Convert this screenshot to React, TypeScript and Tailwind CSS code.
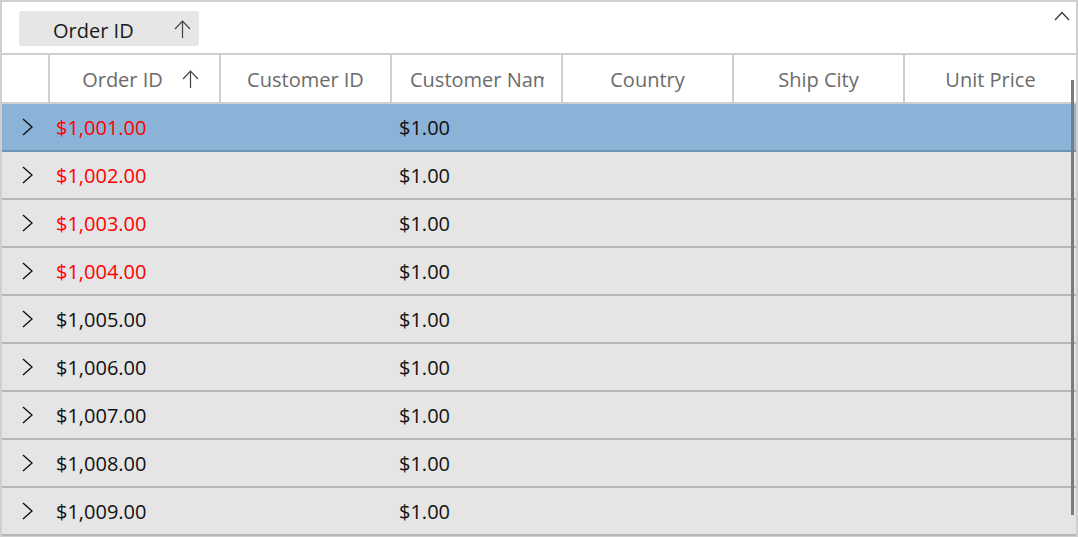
import React from 'react'

type Row = {
    orderId: string;
    price: string;
    red: boolean;
}

const rows: Row[] = [
    { orderId: "$1,001.00", price: "$1.00", red: true },
    { orderId: "$1,002.00", price: "$1.00", red: true },
    { orderId: "$1,003.00", price: "$1.00", red: true },
    { orderId: "$1,004.00", price: "$1.00", red: true },
    { orderId: "$1,005.00", price: "$1.00", red: false },
    { orderId: "$1,006.00", price: "$1.00", red: false },
    { orderId: "$1,007.00", price: "$1.00", red: false },
    { orderId: "$1,008.00", price: "$1.00", red: false },
    { orderId: "$1,009.00", price: "$1.00", red: false },
]

const columns = ["Customer ID", "Customer Name", "Country", "Ship City", "Unit Price"]

const UpArrow = () => (
    <svg width="17" height="18" viewBox="0 0 17 18" className="shrink-0">
        <path d="M8.5 1 V18 M1 9 L8.5 1.2 L16 9" fill="none" stroke="#444" strokeWidth="1.2" />
    </svg>
)

const Chevron = () => (
    <svg width="11" height="18" viewBox="0 0 11 18">
        <path d="M1 1 L10 9 L1 17" fill="none" stroke="#111" strokeWidth="1.4" />
    </svg>
)

const App: React.FC = () => {
    return (
        <div className="w-[1078px] h-[537px] overflow-hidden bg-white" style={{ fontFamily: '"Open Sans", "Liberation Sans", sans-serif' }}>
            <div className="relative h-full border-2 border-[#cfcfcf] flex flex-col">
                {/* group drop area */}
                <div className="h-[53px] shrink-0 flex items-start pl-[17px] pt-[9px] border-b-2 border-[#cfcfcf]">
                    <div className="w-[180px] h-[35px] bg-[#e6e6e6] rounded-[3px] flex items-center pl-[34px] pr-[8px] text-[20px] text-[#1a1a1a]">
                        <span className="flex-1 pt-[4px]">Order ID</span>
                        <UpArrow />
                    </div>
                    <svg width="16" height="10" viewBox="0 0 16 10" className="absolute right-[6px] top-[9px]">
                        <path d="M1 9 L8 1.5 L15 9" fill="none" stroke="#333" strokeWidth="1.2" />
                    </svg>
                </div>

                {/* header */}
                <div className="h-[49px] shrink-0 flex border-b-2 border-[#cfcfcf] text-[20px] text-[#6b6b6b]">
                    <div className="w-[48px] shrink-0 border-r-2 border-[#cfcfcf]" />
                    <div className="w-[171px] shrink-0 border-r-2 border-[#cfcfcf] flex items-center justify-center gap-[19px] pl-[12px]">
                        <span className="pt-[2px]">Order ID</span>
                        <UpArrow />
                    </div>
                    {columns.map((col, index) => (
                        <div key={index} className={`w-[171px] shrink-0 flex items-center pt-[2px] overflow-hidden whitespace-nowrap ${index < 4 ? 'border-r-2 border-[#cfcfcf]' : ''} ${index == 1 ? 'justify-start pl-[18px]' : 'justify-center'}`}>
                            {index == 1 ? <span className="w-[134px] overflow-hidden">{col}</span> : col}
                        </div>
                    ))}
                </div>

                {/* rows */}
                <div className="flex-1 flex flex-col text-[20px]">
                    {rows.map((row, index) => (
                        <div key={index} className={`h-[48px] shrink-0 flex items-center border-b-2 ${index == 0 ? 'bg-[#8ab3d7] border-[#6f93b3]' : 'bg-[#e5e5e5] border-[#b7b7b7]'}`}>
                            <div className="w-[48px] shrink-0 flex items-center pl-[20px]">
                                <Chevron />
                            </div>
                            <div className={`w-[342px] shrink-0 pl-[6px] pt-[2px] ${row.red ? 'text-[#ff0000]' : 'text-[#111]'}`}>{row.orderId}</div>
                            <div className="pl-[7px] pt-[2px] text-[#111]">{row.price}</div>
                        </div>
                    ))}
                </div>

                {/* scroll bar */}
                <div className="absolute right-[2px] top-[78px] w-[3px] h-[435px] bg-[#7b7b7b]" />
            </div>
        </div>
    )
}

export default App
